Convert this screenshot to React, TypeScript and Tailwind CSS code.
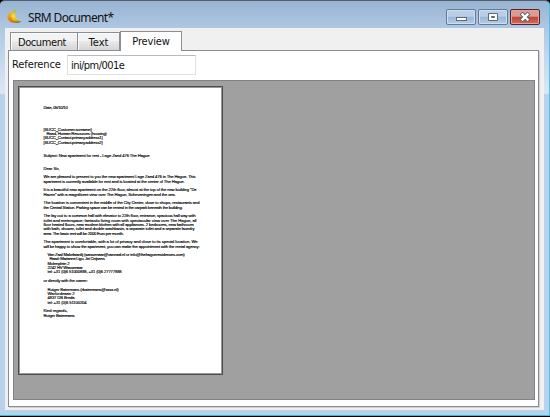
import { useLayoutEffect, useRef, useState } from 'react';

type LineData = { text: string; left?: number; width?: number };

const lines: LineData[] = [
  { text: 'Date, 05/10/10', width: 24 },
  { text: '' }, { text: '' }, { text: '' }, { text: '' },
  { text: '[SUCC_Customer.surname]', width: 48 },
  { text: 'Raad, Human Resources (housing)', left: 3, width: 60 },
  { text: '[SUCC_Contact.primary.address1]', width: 59 },
  { text: '[SUCC_Contact.primary.address2]', width: 59 },
  { text: '' }, { text: '' },
  { text: 'Subject: New apartment for rent - Lage Zand 476 The Hague', width: 106 },
  { text: '' }, { text: '' },
  { text: 'Dear Sir,', width: 16 },
  { text: '' },
  { text: 'We are pleased to present to you the new apartment Lage Zand 476 in The Hague. This', width: 152 },
  { text: 'apartment is currently available for rent and is located at the center of The Hague.', width: 141 },
  { text: '' },
  { text: 'It is a beautiful new apartment on the 22th floor, almost at the top of the new building "De', width: 153 },
  { text: 'Haven" with a magnificent view over The Hague, Scheveningen and the sea.', width: 132 },
  { text: '' },
  { text: 'The location is convenient in the middle of the City Center, close to shops, restaurants and', width: 156 },
  { text: 'the Central Station. Parking space can be rented in the carpark beneath the building.', width: 139 },
  { text: '' },
  { text: 'The lay out is: a common hall with elevator to 22th floor, entrance, spacious hall way with', width: 152 },
  { text: 'toilet and meterspace; fantastic living room with spectacular view over The Hague, all', width: 153 },
  { text: 'floor heated floors, new modern kitchen with all appliances. 2 bedrooms, new bathroom', width: 150 },
  { text: 'with bath, shower, toilet and double washbasin, a separate toilet and a separate laundry', width: 151 },
  { text: 'area. The basic rent will be 2000 Euro per month.', width: 80 },
  { text: '' },
  { text: 'The apartment is comfortable, with a lot of privacy and close to its special location. We', width: 154 },
  { text: 'will be happy to show the apartment, you can make the appointment with the rental agency:', width: 156 },
  { text: '' },
  { text: 'Van Zaal Makelaardij (wassenaar@vanzaal.nl or info@thehagueresidences.com)', left: 4, width: 137 },
  { text: 'Raad: Marianne Ligo, Jet Ceijsens', left: 6, width: 55 },
  { text: 'Molenplein 2', left: 4, width: 22 },
  { text: '2242 HV Wassenaar', left: 4, width: 35 },
  { text: 'tel: +31 (0)6 51000888, +31 (0)6 27777888', left: 4, width: 74 },
  { text: '' },
  { text: 'or directly with the owner:', width: 44 },
  { text: '' },
  { text: 'Rutger Batermans (rbatermans@xxxx.nl)', left: 4, width: 71 },
  { text: 'Warfordeaan 2', left: 4, width: 27 },
  { text: '4837 DB Breda', left: 4, width: 27 },
  { text: 'tel: +31 (0)6 51100204', left: 4, width: 39 },
  { text: '' },
  { text: 'Kind regards,', width: 24 },
  { text: 'Rutger Batermans', width: 31 },
];

// One line of the letter, with its letters spaced to reach the given width.
function LetterLine({ text, left = 0, width = 0 }: LineData) {
  const ref = useRef<HTMLSpanElement>(null);
  const [spacing, setSpacing] = useState(0);
  useLayoutEffect(() => {
    if (ref.current && text) {
      setSpacing((width - ref.current.getBoundingClientRect().width) / text.length);
    }
  }, [text, width]);
  return (
    <div className="h-[4.335px] whitespace-nowrap" style={{ paddingLeft: left }}>
      <span ref={ref} className="block w-max" style={{ letterSpacing: spacing }}>{text}</span>
    </div>
  );
}

function Letter() {
  return (
    <div className="h-[289px] w-[205px] border border-[#4c4c4c] bg-white pl-[24.5px] pt-[19px] font-['Liberation_Sans',sans-serif] text-[4.2px] leading-[4.335px] text-black shadow-[inset_1px_1px_0_#999,inset_-1px_-1px_0_#999] [-webkit-text-stroke:0.15px_black]">
      {lines.map((line, i) => <LetterLine key={i} {...line} />)}
    </div>
  );
}

function WindowButtons() {
  const plain = 'flex h-4 w-[30px] items-center justify-center rounded-[2px] border border-[#607b9c] bg-linear-to-b from-[#b9cfe7] from-45% via-[#98b6d6] via-50% to-[#b4cee9] shadow-[inset_0_0_0_1px_#cfdff0]';
  return (
    <div className="mr-[9px] mt-[8px] flex gap-[2px]">
      <button className={plain} aria-label="Minimize">
        <svg width="12" height="12" viewBox="0 0 12 12"><rect x="1.5" y="6.5" width="10" height="3" fill="#fff" stroke="#606978" /></svg>
      </button>
      <button className={plain} aria-label="Maximize">
        <svg width="12" height="12" viewBox="0 0 12 12"><path d="M1.500 2.500h9v7h-9zM4.500 5.500v1h3v-1z" fill="#fff" stroke="#606978" fillRule="evenodd" /></svg>
      </button>
      <button aria-label="Close" className="flex h-4 w-[30px] items-center justify-center rounded-[2px] border border-[#57202b] bg-linear-to-b from-[#dc9a91] from-45% via-[#bd4432] via-50% to-[#d36c58] shadow-[inset_0_0_0_1px_#e1a49a]">
        <svg width="12" height="10" viewBox="0 0 12 10"><path d="M3.500 2.500l5 5M8.500 2.500l-5 5" stroke="#59606e" strokeWidth="4" strokeLinecap="square" /><path d="M3.500 2.500l5 5M8.500 2.500l-5 5" stroke="#fff" strokeWidth="2.300" strokeLinecap="square" /></svg>
      </button>
    </div>
  );
}

export default function App() {
  const tab = 'flex h-[18px] items-center justify-center border border-b-0 border-[#8c8e96] bg-linear-to-b from-[#f3f3f3] from-45% via-[#e9e9e9] via-50% to-[#d5d5d5] shadow-[inset_1px_1px_0_#fcfcfc]';
  return (
    <div className="h-[417px] w-[550px] overflow-hidden border-b border-black bg-black">
      <div className="flex h-[416px] flex-col rounded-t-[5px] border-b border-r border-t border-b-[#36bfd3] border-r-[#42c5ec] border-t-[#53606d] bg-[#b9d1ea] bg-[linear-gradient(to_bottom,#98b4d2_0px,#b0c9e3_29px,#c5d8ed_60px,#dce7f3_92px,#b9d1ea_94px)] pb-[5px] pl-[5px] font-['DejaVu_Sans_Condensed','DejaVu_Sans',sans-serif] text-[11px] text-[#111]">
        <header className="flex h-[27px] shrink-0 justify-between">
          <div className="flex">
            <svg className="ml-[2px] mt-[8px] shrink-0" width="15" height="15" viewBox="0 0 15 15">
              <defs>
                <linearGradient id="orange" x1="0" y1="0" x2="0" y2="1"><stop stopColor="#f8c02f" /><stop offset=".5" stopColor="#f29a20" /><stop offset="1" stopColor="#dc650f" /></linearGradient>
                <linearGradient id="yellow" x1="0" y1="0" x2="0" y2="1"><stop stopColor="#a9ad2a" /><stop offset=".5" stopColor="#f6e52f" /><stop offset=".8" stopColor="#d9b521" /><stop offset="1" stopColor="#5f5d20" /></linearGradient>
              </defs>
              <path d="M4.500 1.500L2 4L0.300 7L1 10.500L3.500 13L6.500 14L9.500 13.500L6 10L4.500 6.500Z" fill="url(#orange)" />
              <path d="M10 0.500L7 1.500L5 4L4.300 7.500L5.500 11L8 13.200L11 14L14.800 12.600L11 11.300L8.600 8.500L8 5L8.700 2.500Z" fill="url(#yellow)" />
            </svg>
            <h1 className="ml-[6px] mt-[8px] font-['Noto_Sans',sans-serif] text-[12px] leading-[17px] tracking-[-0.62px]">SRM Document*</h1>
          </div>
          <WindowButtons />
        </header>
        <main className="flex h-[382px] w-[539px] flex-col bg-[#f0f0f0] pl-[3px] pt-[3px]">
          <nav className="relative z-10 flex h-[19px] items-end pl-[2px] leading-[15px]">
            <div className={`${tab} w-[68px] pr-1 pt-px tracking-[-0.4px]`}>Document</div>
            <div className={`${tab} w-[42px] border-l-0 pt-px`}>Text</div>
            <div className="-mb-px flex h-[20px] w-[62px] items-center justify-center border border-b-0 border-[#8c8e96] bg-white tracking-[-0.15px]">Preview</div>
          </nav>
          <section className="h-[357px] w-[531px] border border-[#898c95] bg-white px-[4px] shadow-[1px_1px_0_#d0d0d4]">
            <div className="flex h-[29px] items-center pb-px">
              <label className="w-[54px] pt-px tracking-[-0.1px] -ml-px mr-px">Reference</label>
              <div className="h-5 w-[129px] border border-[#dfe1e6] border-t-[#b8bac0] pl-[3px] leading-[20px] tracking-[-0.56px]">ini/pm/001e</div>
            </div>
            <div className="h-[320px] w-[522px] border border-[#7f8288] bg-[#a0a0a0] pl-[4px] pt-[5px]">
              <Letter />
            </div>
          </section>
        </main>
      </div>
    </div>
  );
}
